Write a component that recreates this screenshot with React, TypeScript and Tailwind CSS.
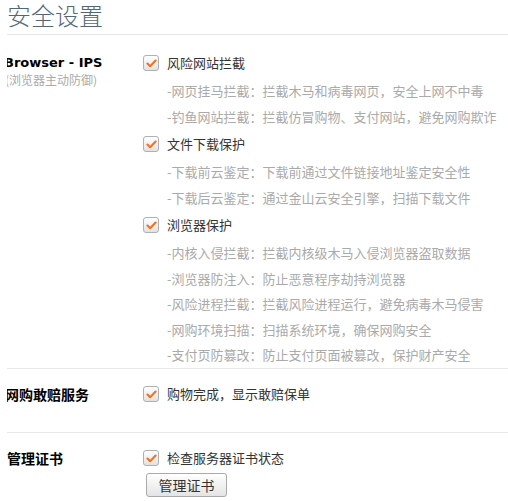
import React from "react";

type Group = {
  label: string;
  items: string[];
};

const ipsGroups: Group[] = [
  {
    label: "风险网站拦截",
    items: [
      "-网页挂马拦截：拦截木马和病毒网页，安全上网不中毒",
      "-钓鱼网站拦截：拦截仿冒购物、支付网站，避免网购欺诈",
    ],
  },
  {
    label: "文件下载保护",
    items: [
      "-下载前云鉴定：下载前通过文件链接地址鉴定安全性",
      "-下载后云鉴定：通过金山云安全引擎，扫描下载文件",
    ],
  },
  {
    label: "浏览器保护",
    items: [
      "-内核入侵拦截：拦截内核级木马入侵浏览器盗取数据",
      "-浏览器防注入：防止恶意程序劫持浏览器",
      "-风险进程拦截：拦截风险进程运行，避免病毒木马侵害",
      "-网购环境扫描：扫描系统环境，确保网购安全",
      "-支付页防篡改：防止支付页面被篡改，保护财产安全",
    ],
  },
];

const cjk = { fontFamily: '"Noto Sans CJK SC", "Liberation Sans", sans-serif' };

const CheckBox = () => (
  <span className="flex h-[16px] w-[16px] shrink-0 items-center justify-center rounded-[3px] border border-[#b0b0b0] bg-gradient-to-b from-white to-[#e2e2e2]">
    <svg width="11" height="9" viewBox="0 0 11 9">
      <path d="M1.5 4.6 L4.2 7.2 L9.6 1.6" fill="none" stroke="#f0731e" strokeWidth="2.1" strokeLinecap="round" strokeLinejoin="round" />
    </svg>
  </span>
);

const CheckRow = ({ text }: { text: string }) => (
  <div className="flex h-[30px] items-center gap-[8px]">
    <CheckBox />
    <span className="text-[13px] text-[#333]">{text}</span>
  </div>
);

export default function App() {
  return (
    <div className="min-h-[501px] w-[508px] bg-white" style={cjk}>
      <div className="ml-[7px]">
        {/* header */}
        <div className="flex h-[35px] items-start border-b border-[#e6e6e6]">
          <h1 className="text-[24px] font-light leading-[30px] text-[#536679]">安全设置</h1>
        </div>

        {/* Browser - IPS */}
        <div className="flex h-[334px] border-b border-[#e8e8e8] pt-[13px]">
          <div className="w-[136px] shrink-0 overflow-hidden">
            <div
              className="-ml-[3px] whitespace-nowrap pt-[5px] text-[13px] font-bold leading-[20px] text-black"
              style={{ fontFamily: '"DejaVu Sans", Verdana, sans-serif' }}
            >
              Browser - IPS
            </div>
            <div className="-ml-[2px] whitespace-nowrap text-[12px] leading-[14px] text-[#aaa]">(浏览器主动防御)</div>
          </div>
          <div className="flex flex-col">
            {ipsGroups.map((g) => (
              <div key={g.label} className="flex flex-col">
                <CheckRow text={g.label} />
                {g.items.map((t) => (
                  <div key={t} className="flex h-[25.5px] items-center whitespace-nowrap pl-[24px] text-[13px] text-[#aaa]">
                    {t}
                  </div>
                ))}
              </div>
            ))}
          </div>
        </div>

        {/* 网购敢赔服务 */}
        <div className="flex h-[64px] border-b border-[#e8e8e8] pt-[10px]">
          <div className="flex h-[30px] w-[136px] shrink-0 items-center overflow-hidden">
            <span className="-ml-[2px] whitespace-nowrap text-[14px] font-bold text-black">网购敢赔服务</span>
          </div>
          <CheckRow text="购物完成，显示敢赔保单" />
        </div>

        {/* 管理证书 */}
        <div className="flex pt-[10px]">
          <div className="flex h-[30px] w-[136px] shrink-0 items-center">
            <span className="text-[14px] font-bold text-black">管理证书</span>
          </div>
          <div className="flex flex-col">
            <CheckRow text="检查服务器证书状态" />
            <button className="ml-[3px] h-[24px] w-[81px] rounded-[3px] border border-[#a9a9a9] bg-gradient-to-b from-white to-[#e4e4e4] text-[14px] leading-none text-[#333]">
              管理证书
            </button>
          </div>
        </div>
      </div>
    </div>
  );
}
